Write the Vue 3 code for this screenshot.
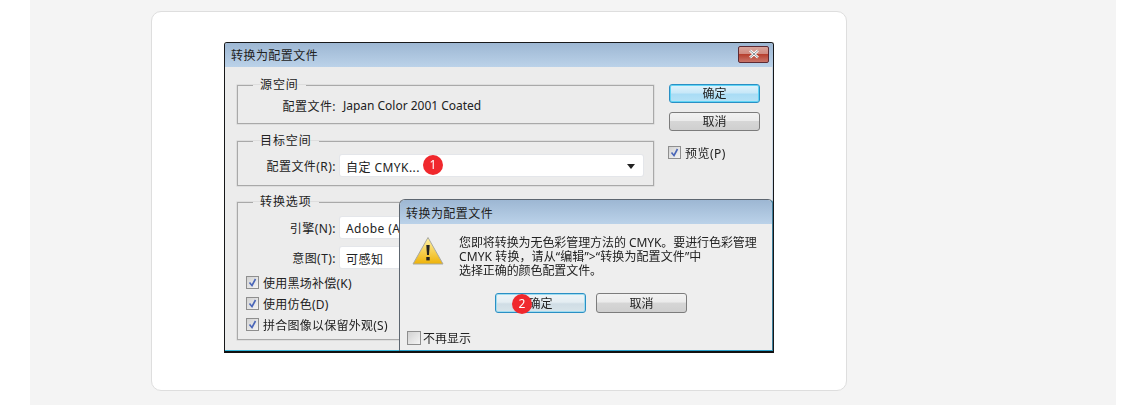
<template>
  <div class="page">
    <div class="card">
      <div class="shot">
        <div class="dialog">
          <div class="titlebar">
            <span>转换为配置文件</span>
            <button class="close-btn">
              <svg viewBox="0 0 16 10" width="16" height="10">
                <path d="M4 1.5 12 8.5M12 1.5 4 8.5" stroke="#fff" stroke-width="2.6" />
                <path d="M4 1.5 12 8.5M12 1.5 4 8.5" stroke="#55606c" stroke-width=".7" />
              </svg>
            </button>
          </div>
          <div class="dialog-body">
            <div class="groups">
              <fieldset class="group group-source">
                <legend>源空间</legend>
                <div class="row source-row">
                  <label>配置文件:</label>
                  <span class="value">Japan Color 2001 Coated</span>
                </div>
              </fieldset>
              <fieldset class="group group-target">
                <legend>目标空间</legend>
                <div class="row target-row">
                  <label>配置文件(R):</label>
                  <div class="select">
                    <span>自定 CMYK...</span>
                    <i class="caret"></i>
                  </div>
                </div>
              </fieldset>
              <fieldset class="group group-options">
                <legend>转换选项</legend>
                <div class="row engine-row">
                  <label>引擎(N):</label>
                  <div class="select"><span>Adobe (ACE)</span></div>
                </div>
                <div class="row intent-row">
                  <label>意图(T):</label>
                  <div class="select"><span>可感知</span></div>
                </div>
                <div class="checks">
                  <div class="check" v-for="c in checks" :key="c">
                    <span class="box on">
                      <svg viewBox="0 0 11 11" width="11" height="11"><path d="M2.5 5.5 5 8.5 8.5 2" fill="none" stroke="#4a66b8" stroke-width="1.6" /></svg>
                    </span>
                    {{ c }}
                  </div>
                </div>
              </fieldset>
            </div>
            <div class="actions">
              <button class="btn primary">确定</button>
              <button class="btn">取消</button>
              <div class="check preview">
                <span class="box on">
                  <svg viewBox="0 0 11 11" width="11" height="11"><path d="M2.5 5.5 5 8.5 8.5 2" fill="none" stroke="#4a66b8" stroke-width="1.6" /></svg>
                </span>
                预览(P)
              </div>
            </div>
          </div>

          <div class="alert">
            <div class="alert-title">转换为配置文件</div>
            <div class="alert-body">
              <div class="alert-msg">
                <svg class="warn" viewBox="0 0 32 30" width="32" height="30">
                  <defs>
                    <linearGradient id="warnFill" x1="0" y1="0" x2="0" y2="1">
                      <stop offset="0" stop-color="#fff3a8" />
                      <stop offset="1" stop-color="#eeb208" />
                    </linearGradient>
                  </defs>
                  <path d="M16 1.5 31 28H1Z" fill="url(#warnFill)" stroke="#a8a8a0" stroke-linejoin="round" />
                  <path d="M14.3 9h3.4l-.7 10h-2Z" fill="#222" />
                  <rect x="14.3" y="21" width="3.4" height="3.4" fill="#222" />
                </svg>
                <p>您即将转换为无色彩管理方法的 CMYK。要进行色彩管理<br /><span class="wide-line">CMYK 转换，请从“编辑”&gt;“转换为配置文件”中</span><br />选择正确的颜色配置文件。</p>
              </div>
              <div class="alert-actions">
                <button class="btn primary soft">确定</button>
                <button class="btn">取消</button>
              </div>
              <div class="check dont-show">
                <span class="box"></span>
                不再显示
              </div>
            </div>
          </div>
        </div>
        <span class="badge badge-one">1</span>
        <span class="badge badge-two">2</span>
      </div>
    </div>
  </div>
</template>

<script setup>
const checks = ['使用黑场补偿(K)', '使用仿色(D)', '拼合图像以保留外观(S)']
</script>

<style>
html, body { margin: 0; background: #fff; }
</style>

<style scoped>
.page {
  width: 1086px;
  height: 405px;
  margin-left: 30px;
  padding: 11px 0 0 121px;
  box-sizing: border-box;
  background: #f4f4f4;
  overflow: hidden;
}

.card {
  width: 696px;
  height: 380px;
  box-sizing: border-box;
  padding-top: 30px;
  background: #fff;
  border: 1px solid #dedede;
  border-radius: 10px;
  display: flex;
  justify-content: center;
}

.shot {
  position: relative;
  width: 550px;
  height: 311px;
  font-family: "Noto Sans", "Noto Sans CJK SC", sans-serif;
  font-size: 12px;
  letter-spacing: .45px;
  color: #222;
}

.dialog {
  position: relative;
  height: 100%;
  box-sizing: border-box;
  background: #ececec;
  border: 1px solid #17181a;
  border-bottom: 2px solid #101010;
  border-radius: 3px 3px 0 0;
  box-shadow: inset 0 -1px 0 #35b5d8, inset -1px 0 0 #c9d7e4;
  filter: blur(.25px);
  overflow: hidden;
}

.titlebar {
  height: 24px;
  padding-left: 6px;
  display: flex;
  align-items: center;
  justify-content: space-between;
  background: linear-gradient(#9db7d3, #bbd2e9);
}

.close-btn {
  width: 31px;
  height: 17px;
  margin-right: 4px;
  margin-top: -2px;
  padding: 0;
  display: flex;
  align-items: center;
  justify-content: center;
  border: 1px solid #5d2a33;
  border-radius: 2px;
  background: linear-gradient(#d9a59c 0, #d08a80 45%, #b7402f 50%, #c9756a 100%);
}

.dialog-body {
  display: flex;
  padding: 10px 0 0 12px;
}

.groups {
  flex: none;
  width: 417px;
  display: flex;
  flex-direction: column;
}

.group {
  margin: 0;
  padding: 0;
  border: 1px solid #a9a9a9;
  box-shadow: 0 0 0 .5px #d0d0d0;
  min-width: 0;
  box-sizing: border-box;
}

.group legend {
  margin-left: 15px;
  padding: 0 7px;
  font-size: 12px;
  line-height: 16px;
  letter-spacing: .9px;
}

.group-source { height: 47px; margin-bottom: 9px; }
.group-target { height: 53px; margin-bottom: 8px; }
.group-options { height: 146px; }

.row {
  display: flex;
  align-items: center;
  height: 23px;
}

.source-row { margin-top: 1px; }
.target-row { margin-top: 5px; }
.engine-row { margin-top: 6px; }
.intent-row { margin-top: 7px; }

.row label {
  width: 102px;
  padding-right: 4px;
  box-sizing: border-box;
  text-align: right;
  white-space: nowrap;
}

.value { margin-left: 3px; letter-spacing: -.02px; }

.select {
  flex: 1;
  height: 21px;
  margin-right: 10px;
  padding: 2px 6px 0;
  box-sizing: border-box;
  display: flex;
  align-items: center;
  justify-content: space-between;
  background: #fff;
  border-radius: 2px;
  box-shadow: 0 0 0 1px #e4e6ea;
}

.caret {
  width: 0;
  height: 0;
  margin-right: 2px;
  border: 4.5px solid transparent;
  border-top: 5px solid #222;
  border-bottom: 0;
}

.checks { margin: 3px 0 0 8px; letter-spacing: .25px; }

.check {
  height: 21px;
  display: flex;
  align-items: center;
  gap: 4px;
  white-space: nowrap;
}

.box {
  width: 11px;
  height: 11px;
  flex: none;
  display: block;
  border: 1px solid #8e8e8e;
  background: linear-gradient(135deg, #d2d2d2, #f4f4f4);
}

.box svg { display: block; }

.actions {
  flex: 1;
  padding: 7px 0 0 15px;
  display: flex;
  flex-direction: column;
}

.btn {
  width: 91px;
  height: 19px;
  padding: 0;
  font: inherit;
  line-height: 15px;
  color: #222;
  border: 1px solid #7c7c7c;
  border-radius: 3px;
  background: linear-gradient(#f2f2f2 0, #ebebeb 45%, #d6d6d6 50%, #cfcfcf 100%);
}

.btn.primary {
  border: 1px solid #2a8fc4;
  box-shadow: inset 0 0 0 1px #60d4f5;
  background: linear-gradient(#e0f3fc 0, #c8e8f8 45%, #a9dcf5 55%, #b6e2f6 100%);
}

.actions .btn + .btn { margin-top: 9px; }

.preview { margin: 11px 0 0 -1px; }

.alert {
  position: absolute;
  left: 174px;
  top: 156px;
  width: 375px;
  height: 153px;
  box-sizing: border-box;
  background: #eee;
  border: 1px solid #5d6670;
  border-bottom: 2px solid #2aa0c9;
  border-right: 2px solid #3f7f9c;
  border-radius: 6px 6px 0 0;
  overflow: hidden;
}

.alert-title {
  height: 24px;
  padding: 0 6px;
  line-height: 27px;
  background: linear-gradient(#9db7d3, #bbd2e9);
}

.alert-body { padding-top: 12px; }

.alert-msg {
  display: flex;
  align-items: flex-start;
  padding-left: 12px;
}

.alert-msg p {
  margin: 0 0 0 15px;
  line-height: 14px;
  white-space: nowrap;
  font-size: 12px;
  letter-spacing: -.08px;
}

.wide-line { letter-spacing: .1px; }

.alert-actions {
  margin-top: 15px;
  padding-left: 95px;
  display: flex;
  gap: 10px;
}

.alert-actions .btn { width: 91px; height: 20px; }

.btn.soft {
  background: linear-gradient(#eef4f7 0, #e4edf2 45%, #d0dde5 55%, #d8e4ea 100%);
  box-shadow: inset 0 0 0 1px #9fdcf0;
}

.dont-show { margin: 14px 0 0 7px; gap: 2px; letter-spacing: 0; }

.dont-show .box { width: 12px; height: 12px; }

.badge {
  position: absolute;
  width: 20px;
  height: 20px;
  border-radius: 50%;
  background: #f0282d;
  color: #fff;
  font-family: "Noto Sans", sans-serif;
  font-size: 12px;
  letter-spacing: 0;
  line-height: 20px;
  text-align: center;
}

.badge-one { left: 199px; top: 113px; }
.badge-two { left: 288px; top: 252px; }
</style>
